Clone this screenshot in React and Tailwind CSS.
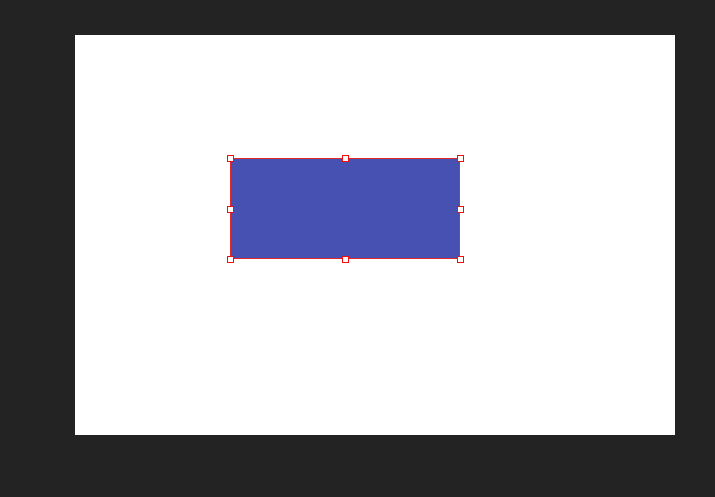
import React from 'react';

const handles = [
  { x: 0, y: 0 },
  { x: 115, y: 0 },
  { x: 230, y: 0 },
  { x: 0, y: 51 },
  { x: 230, y: 51 },
  { x: 0, y: 101 },
  { x: 115, y: 101 },
  { x: 230, y: 101 },
];

export default function App() {
  return (
    <div className="w-[715px] h-[497px] bg-[#232323] pl-[75px] pt-[35px]">
      {/* Artboard */}
      <div className="relative w-[600px] h-[400px] bg-white">
        {/* Selected shape with transform handles */}
        <div className="absolute left-[155px] top-[123px] w-[230px] h-[101px]">
          <div className="w-full h-full bg-[#4751b1] border border-[#e0282d]" />
          {handles.map((h, i) => (
            <div
              key={i}
              className="absolute w-[7px] h-[7px] bg-[#f01010] p-[1px]"
              style={{ left: h.x - 3, top: h.y - 3 }}
            >
              <div className="w-full h-full bg-white" />
            </div>
          ))}
        </div>
      </div>
    </div>
  );
}
